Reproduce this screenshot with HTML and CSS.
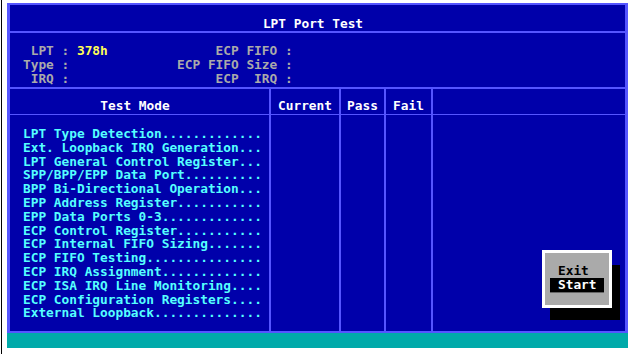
FILE: index.html
```html
<!DOCTYPE html>
<html lang="en">
  <head>
    <meta charset="UTF-8" />
    <title>LPT Port Test</title>
    <link rel="stylesheet" href="styles.css">
  </head>
  <body>
    <div class="screen">
      <div class="panel">
        <div class="title">LPT Port Test</div>

        <div class="info">
          <div class="labels">
            <div>LPT :</div>
            <div>Type :</div>
            <div>IRQ :</div>
          </div>
          <div class="values">
            <div class="value">378h</div>
          </div>
          <div class="fifo">
            <div>ECP FIFO :</div>
            <div>ECP FIFO Size :</div>
            <div>ECP  IRQ :</div>
          </div>
        </div>

        <div class="table">
          <div class="head">Test Mode</div>
          <div class="head center">Current</div>
          <div class="head center">Pass</div>
          <div class="head center">Fail</div>
          <div class="head last"></div>

          <pre class="cell tests">LPT Type Detection.............
Ext. Loopback IRQ Generation...
LPT General Control Register...
SPP/BPP/EPP Data Port..........
BPP Bi-Directional Operation...
EPP Address Register...........
EPP Data Ports 0-3.............
ECP Control Register...........
ECP Internal FIFO Sizing.......
ECP FIFO Testing...............
ECP IRQ Assignment.............
ECP ISA IRQ Line Monitoring....
ECP Configuration Registers....
External Loopback..............</pre>
          <div class="cell"></div>
          <div class="cell"></div>
          <div class="cell"></div>
          <div class="cell last"></div>
        </div>

        <!-- popup menu -->
        <div class="menu-shadow"></div>
        <div class="menu">
          <div class="item">Exit</div>
          <div class="item selected">Start</div>
        </div>
      </div>
      <div class="status"></div>
    </div>
  </body>
</html>
```

FILE: styles.css
```css
      body, html {
        margin: 0;
        background: #fff;
      }

      .screen {
        height: 354px;
        box-sizing: border-box;
        margin-left: 1px;
        border-left: 1px solid #000;
        padding: 3px 0 0 5px;
        font-family: "DejaVu Sans Mono", monospace;
        font-weight: bold;
        font-size: 12.8px;
      }

      pre {
        margin: 0;
        font: inherit;
      }

      .panel {
        position: relative;
        width: 621px;
        height: 330px;
        box-sizing: border-box;
        background: #0000aa;
        border: 3px solid #5555ff;
        border-top-width: 2px;
        border-bottom-width: 2px;
      }

      .title {
        height: 28px;
        box-sizing: border-box;
        padding: 12px 9px 0 0;
        line-height: 14px;
        text-align: center;
        color: #fff;
        border-bottom: 2px solid #5555ff;
      }

      .info {
        display: flex;
        height: 56px;
        box-sizing: border-box;
        padding: 11px 0 0 13px;
        line-height: 14px;
        color: #aaaaaa;
        border-bottom: 2px solid #5555ff;
      }

      .labels {
        width: 6ch;
        text-align: right;
      }

      .values {
        width: 13ch;
        margin-left: 1ch;
      }

      .value {
        color: #ffff55;
      }

      .fifo {
        width: 15ch;
        text-align: right;
      }

      .fifo div {
        white-space: pre;
      }

      .table {
        display: grid;
        grid-template-columns: 261px 70px 45px 47px 1fr;
        grid-template-rows: 26px 216px;
      }

      .head, .cell {
        box-sizing: border-box;
        border-right: 2px solid #5555ff;
      }

      .head {
        padding: 10px 9px 0 0;
        line-height: 14px;
        color: #fff;
        text-align: center;
        border-bottom: 1px solid #5555ff;
      }

      .head.center {
        padding-right: 0;
      }

      .last {
        border-right: 0;
      }

      .tests {
        padding: 12px 0 0 13px;
        line-height: 13.8px;
        color: #55ffff;
      }

      .menu-shadow {
        position: absolute;
        left: 540px;
        top: 260px;
        width: 70px;
        height: 55px;
        background: #000;
      }

      .menu {
        position: absolute;
        left: 532px;
        top: 245px;
        width: 70px;
        height: 58px;
        box-sizing: border-box;
        padding: 11px 5px 0;
        background: #aaaaaa;
        border: 3px solid #fff;
      }

      .item {
        height: 14px;
        padding-left: 8px;
        line-height: 14px;
        color: #000;
      }

      .item.selected {
        color: #fff;
        background: #000;
        box-shadow: 0 1px 0 #666;
      }

      .status {
        width: 621px;
        height: 15px;
        background: #00aaaa;
      }
```
